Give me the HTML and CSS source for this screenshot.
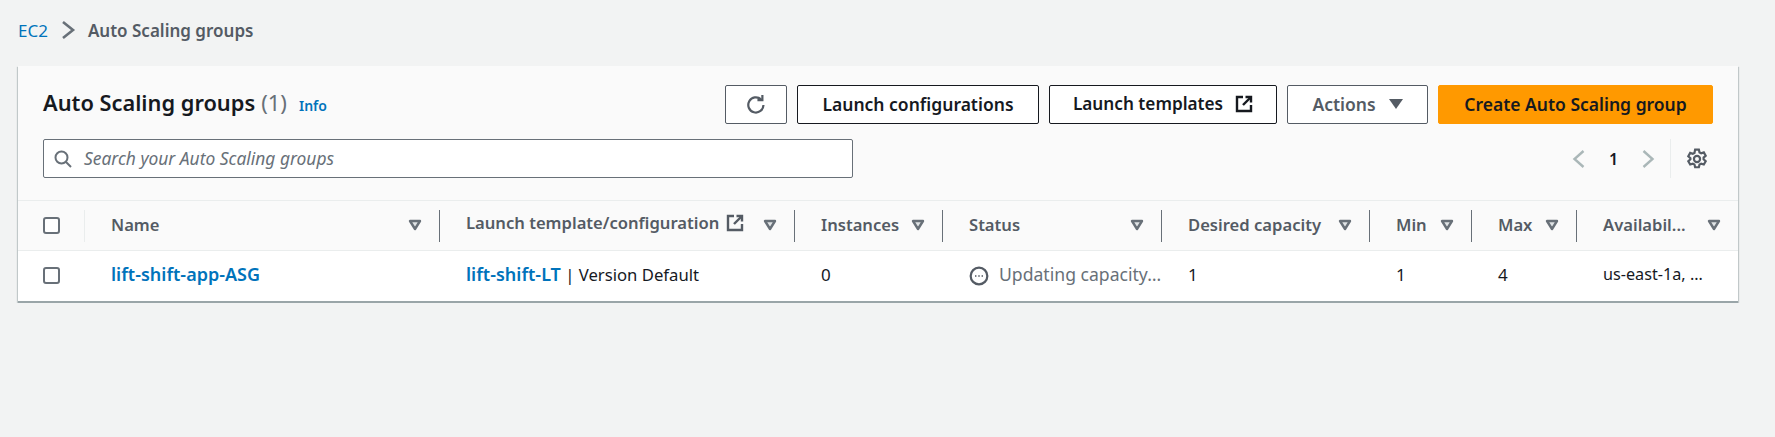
FILE: index.html
```html
<!DOCTYPE html>
<html lang="en">
<head>
    <meta charset="UTF-8">
    <title>Auto Scaling groups</title>
    <link rel="stylesheet" href="styles.css">
</head>
<body>
    <nav class="crumbs">
        <a class="crumb-link" href="#">EC2</a>
        <svg class="crumb-sep" width="16" height="22" viewBox="0 0 16 22"><path d="M3 3l10 8-10 8"/></svg>
        <span class="crumb-current">Auto Scaling groups</span>
    </nav>

    <section class="card">
        <div class="card-header">
            <div class="top-row">
                <div class="title-wrap">
                    <h1 class="title">Auto Scaling groups</h1>
                    <span class="count">(1)</span>
                    <a class="info" href="#">Info</a>
                </div>
                <div class="actions">
                    <button class="btn btn-refresh" aria-label="Refresh">
                        <svg width="22" height="22" viewBox="0 0 20 20"><path d="M16.8 10a6.900 6.900 0 1 1-2.200-5.100"/><path d="M15.800 1v4.500h-4.500"/></svg>
                    </button>
                    <button class="btn btn-configs">Launch configurations</button>
                    <button class="btn btn-templates">Launch templates
                        <svg class="ext" width="18" height="18" viewBox="0 0 18 18"><path d="M8 2H2v14h14v-6"/><path d="M10.500 2H16v5.500"/><path d="M16 2L8 10"/></svg>
                    </button>
                    <button class="btn btn-actions">Actions <span class="caret"></span></button>
                    <button class="btn btn-primary">Create Auto Scaling group</button>
                </div>
            </div>
            <div class="filter-row">
                <div class="search">
                    <svg width="18" height="18" viewBox="0 0 18 18"><circle cx="7.500" cy="7.500" r="6"/><path d="M12 12l5 5"/></svg>
                    <span class="placeholder">Search your Auto Scaling groups</span>
                </div>
                <div class="pager">
                    <svg class="chev" width="14" height="20" viewBox="0 0 14 20"><path d="M11.500 2l-9 8 9 8"/></svg>
                    <span class="page-num">1</span>
                    <svg class="chev" width="14" height="20" viewBox="0 0 14 20"><path d="M2.500 2l9 8-9 8"/></svg>
                    <span class="pager-sep"></span>
                    <svg class="gear" width="22" height="22" viewBox="0 0 20 20">
                        <circle cx="10" cy="10" r="2.800"/>
                        <path d="M8.300 1.500h3.400l.6 2.500 1.500.8 2.400-.8 1.700 3-1.900 1.700v1.600l1.900 1.700-1.700 3-2.400-.8-1.500.8-.6 2.500H8.300l-.6-2.500-1.500-.8-2.400.8-1.700-3 1.900-1.700V9.200L2.100 7.500l1.700-3 2.400.8 1.500-.8z"/>
                    </svg>
                </div>
            </div>
        </div>

        <table class="groups">
            <thead>
                <tr>
                    <th class="col-check"><div class="th-in th-first"><span class="checkbox"></span></div></th>
                    <th class="col-name"><div class="th-in"><span class="th-label">Name</span><svg class="sort" width="14" height="12" viewBox="0 0 14 12"><path d="M2 2h10l-5 8z"/></svg></div></th>
                    <th class="col-lt"><div class="th-in"><span class="th-label th-raised">Launch template/configuration
                        <svg class="ext ext-head" width="18" height="18" viewBox="0 0 18 18"><path d="M8 2H2v14h14v-6"/><path d="M10.500 2H16v5.500"/><path d="M16 2L8 10"/></svg></span><svg class="sort" width="14" height="12" viewBox="0 0 14 12"><path d="M2 2h10l-5 8z"/></svg></div></th>
                    <th class="col-inst"><div class="th-in"><span class="th-label">Instances</span><svg class="sort" width="14" height="12" viewBox="0 0 14 12"><path d="M2 2h10l-5 8z"/></svg></div></th>
                    <th class="col-status"><div class="th-in"><span class="th-label">Status</span><svg class="sort" width="14" height="12" viewBox="0 0 14 12"><path d="M2 2h10l-5 8z"/></svg></div></th>
                    <th class="col-desired"><div class="th-in"><span class="th-label">Desired capacity</span><svg class="sort" width="14" height="12" viewBox="0 0 14 12"><path d="M2 2h10l-5 8z"/></svg></div></th>
                    <th class="col-min"><div class="th-in"><span class="th-label">Min</span><svg class="sort" width="14" height="12" viewBox="0 0 14 12"><path d="M2 2h10l-5 8z"/></svg></div></th>
                    <th class="col-max"><div class="th-in"><span class="th-label">Max</span><svg class="sort" width="14" height="12" viewBox="0 0 14 12"><path d="M2 2h10l-5 8z"/></svg></div></th>
                    <th class="col-avail"><div class="th-in th-last"><span class="th-label">Availabil...</span><svg class="sort" width="14" height="12" viewBox="0 0 14 12"><path d="M2 2h10l-5 8z"/></svg></div></th>
                </tr>
            </thead>
            <tbody>
                <tr>
                    <td class="td-check"><span class="checkbox"></span></td>
                    <td><a class="link" href="#">lift-shift-app-ASG</a></td>
                    <td class="td-lt"><a class="link" href="#">lift-shift-LT</a> | Version Default</td>
                    <td>0</td>
                    <td>
                        <div class="status">
                            <svg width="20" height="20" viewBox="0 0 18 18"><circle cx="9" cy="9" r="7.500"/><path class="dots" d="M5.600 9h1M8.500 9h1M11.400 9h1"/></svg>
                            <span class="status-text">Updating capacity…</span>
                        </div>
                    </td>
                    <td>1</td>
                    <td>1</td>
                    <td>4</td>
                    <td class="td-az">us-east-1a, …</td>
                </tr>
            </tbody>
        </table>
    </section>
</body>
</html>
```

FILE: styles.css
```css
body {
    margin: 0;
    background: #f2f3f3;
    color: #16191f;
    font-family: "Noto Sans", sans-serif;
    font-size: 17px;
}

.crumbs {
    display: flex;
    align-items: center;
    height: 20px;
    padding: 20px 18px 26px;
    font-size: 17px;
}

.crumb-link {
    color: #0073bb;
    text-decoration: none;
}

.crumb-sep {
    margin: 0 12px 0 12px;
    fill: none;
    stroke: #687078;
    stroke-width: 2.600;
}

.crumb-current {
    color: #545b64;
    font-weight: 600;
}

.card {
    margin: 0 37px 0 18px;
    background: #fafafa;
    border-bottom: 2px solid #9aa5a8;
    box-shadow: 1px 1px 1px 0 rgba(0, 28, 36, 0.2), -1px 1px 1px 0 rgba(0, 28, 36, 0.2);
}

.card-header {
    padding: 19px 25px 22px;
    height: 93px;
    border-bottom: 1px solid #eaeded;
}

.top-row {
    display: flex;
    justify-content: space-between;
    align-items: center;
    height: 39px;
}

.title-wrap {
    display: flex;
    align-items: baseline;
    gap: 6px;
    margin-top: -6px;
}

.title {
    margin: 0;
    font-size: 21.800px;
    font-weight: 600;
}

.count {
    font-size: 22px;
    color: #687078;
}

.info {
    margin-left: 6px;
    color: #0073bb;
    font-size: 14px;
    font-weight: 600;
    text-decoration: none;
}

.actions {
    display: flex;
    gap: 10px;
}

.btn {
    display: flex;
    align-items: center;
    justify-content: center;
    box-sizing: border-box;
    height: 39px;
    padding: 0 0 2px;
    background: #fff;
    border: 1px solid #16191f;
    border-radius: 2px;
    color: #16191f;
    font-family: inherit;
    font-size: 17.500px;
    font-weight: 600;
}

.btn-refresh {
    width: 62px;
    padding: 0;
    border-color: #545b64;
}

.btn-refresh svg {
    fill: none;
    stroke: #545b64;
    stroke-width: 2;
}

.btn-configs {
    width: 242px;
}

.btn-templates {
    width: 228px;
    gap: 12px;
    font-size: 17.200px;
}

.ext {
    fill: none;
    stroke: #16191f;
    stroke-width: 2.400;
}

.ext-head {
    stroke: #545b64;
}

.btn-actions {
    width: 141px;
    gap: 13px;
    color: #545b64;
    border-color: #545b64;
}

.caret {
    width: 0;
    height: 0;
    border-left: 7px solid transparent;
    border-right: 7px solid transparent;
    border-top: 10px solid #545b64;
}

.btn-primary {
    width: 275px;
    background: #ff9900;
    border-color: #ff9900;
}

.filter-row {
    display: flex;
    justify-content: space-between;
    align-items: center;
    margin-top: 15px;
    height: 39px;
}

.search {
    display: flex;
    align-items: center;
    gap: 12px;
    box-sizing: border-box;
    width: 810px;
    height: 39px;
    padding-left: 10px;
    background: #fff;
    border: 1px solid #687078;
    border-radius: 2px;
}

.search svg {
    fill: none;
    stroke: #687078;
    stroke-width: 2;
}

.placeholder {
    margin-bottom: 2px;
    color: #687078;
    font-style: italic;
    font-size: 17.400px;
}

.pager {
    display: flex;
    align-items: center;
    height: 39px;
}

.chev {
    fill: none;
    stroke: #aab7b8;
    stroke-width: 2.400;
}

.page-num {
    width: 55px;
    text-align: center;
    font-weight: 600;
    font-size: 16px;
}

.pager-sep {
    width: 1px;
    height: 39px;
    margin: 0 15px 0 15px;
    background: #eaeded;
}

.gear {
    margin-right: 5px;
    fill: none;
    stroke: #545b64;
    stroke-width: 2;
}

.groups {
    width: 100%;
    table-layout: fixed;
    border-collapse: collapse;
}

.groups th {
    height: 49px;
    padding: 0;
    background: #fafafa;
    border-bottom: 1px solid #eaeded;
    color: #545b64;
    font-size: 16.600px;
    font-weight: 600;
    text-align: left;
}

.col-check { width: 67px; }
.col-name { width: 355px; }
.col-lt { width: 355px; }
.col-inst { width: 148px; }
.col-status { width: 219px; }
.col-desired { width: 208px; }
.col-min { width: 102px; }
.col-max { width: 105px; }

.th-in {
    display: flex;
    align-items: center;
    justify-content: space-between;
    box-sizing: border-box;
    height: 32px;
    padding: 0 17px 0 26px;
    border-right: 1px solid #687078;
}

.th-first {
    padding-left: 25px;
    border-right-color: #eaeded;
}

.th-last {
    border-right: none;
}

.th-label {
    display: flex;
    align-items: center;
    gap: 7px;
    margin-top: -3px;
    white-space: nowrap;
}

.th-raised {
    margin-top: -6px;
}

.sort {
    flex: none;
    margin-top: -2px;
    fill: #dfe3e5;
    stroke: #687078;
    stroke-width: 2.400;
    stroke-linejoin: round;
}

.groups td {
    height: 50px;
    padding: 0 0 3px 26px;
    box-sizing: border-box;
    background: #fff;
    font-size: 17px;
    white-space: nowrap;
}

.groups .td-check {
    padding: 0 0 0 25px;
}

.groups .td-lt {
    font-size: 16.700px;
}

.groups .td-az {
    font-size: 16.200px;
}

.checkbox {
    display: block;
    box-sizing: border-box;
    width: 17px;
    height: 17px;
    background: #fff;
    border: 2px solid #687078;
    border-radius: 3px;
}

.link {
    color: #0073bb;
    font-size: 18px;
    font-weight: 600;
    text-decoration: none;
}

.status {
    display: flex;
    align-items: center;
    gap: 10px;
    color: #687078;
    font-size: 17.600px;
}

.status svg {
    flex: none;
    margin-top: 3px;
    fill: none;
    stroke: #545b64;
    stroke-width: 2;
}

.status .dots {
    stroke-width: 1.600;
}

.status-text {
    white-space: nowrap;
}
```
